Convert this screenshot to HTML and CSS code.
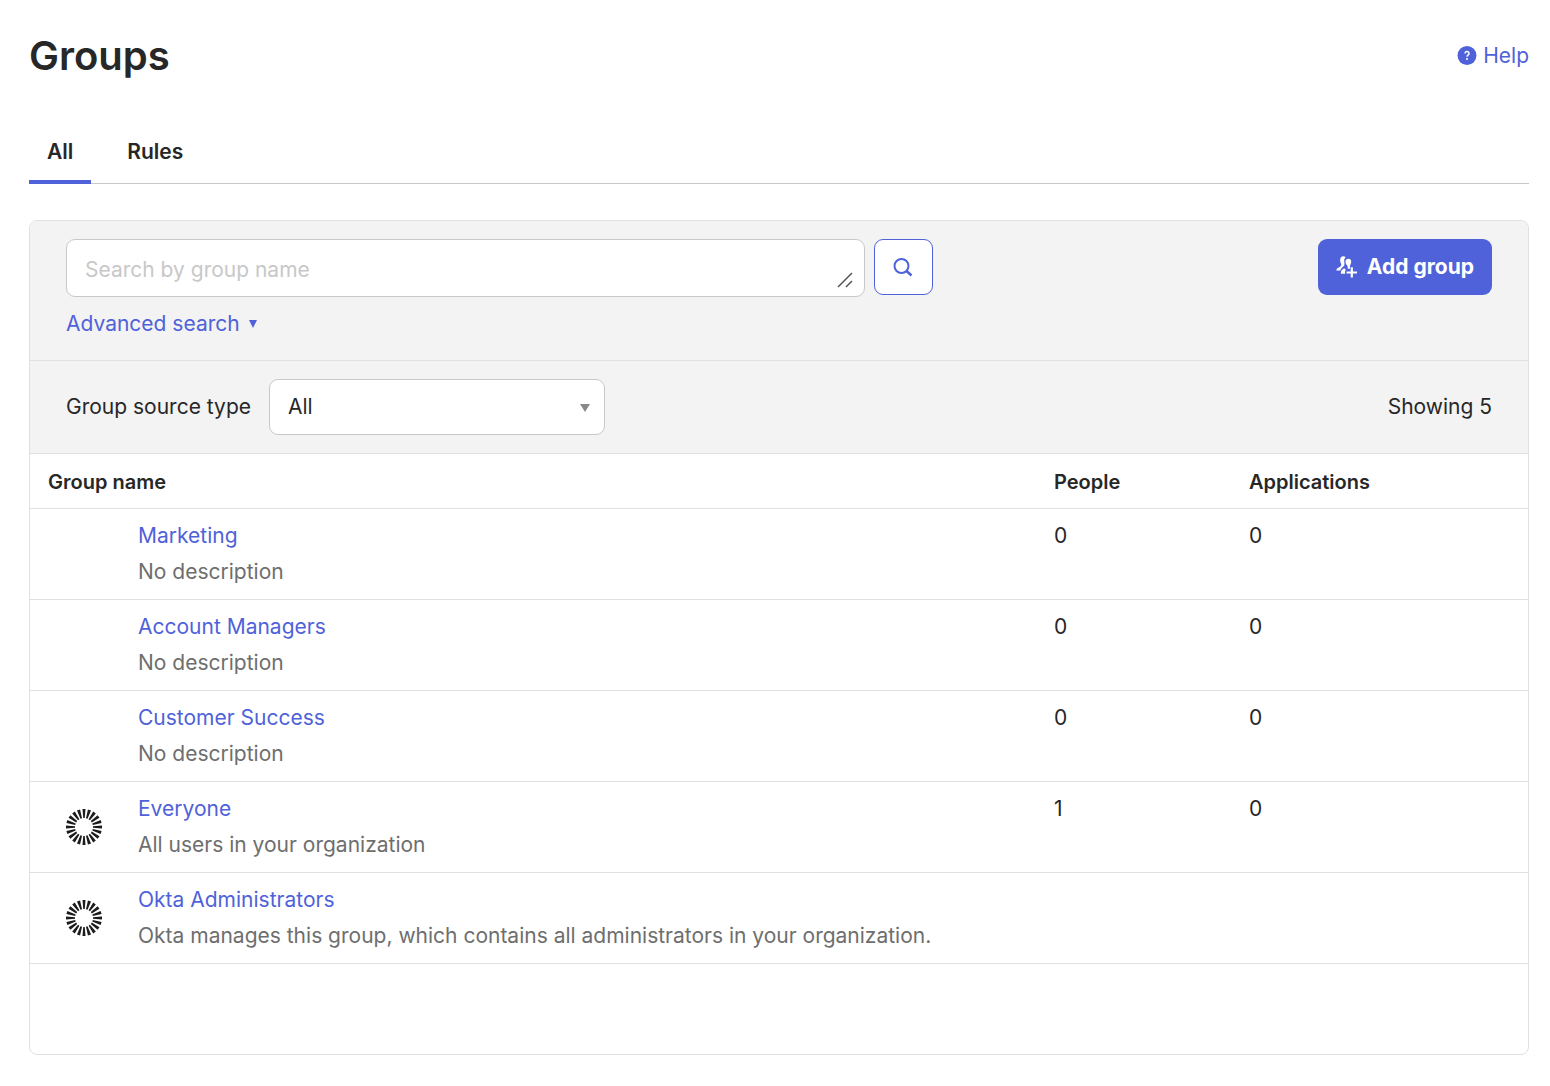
FILE: index.html
```html
<!DOCTYPE html>
<html lang="en">

<head>
    <meta charset="UTF-8">
    <meta name="viewport" content="width=device-width, initial-scale=1.0">
    <title>Groups</title>
    <link rel="stylesheet" href="styles.css">
</head>

<body>
    <svg class="symbols" aria-hidden="true">
        <symbol id="okta-logo" viewBox="0 0 36 36">
            <circle cx="18" cy="18" r="13.500" fill="none" stroke="#1c1c1c" stroke-width="9" pathLength="200"
                stroke-dasharray="5.600 4.400" stroke-dashoffset="2.800" />
        </symbol>
    </svg>

    <header class="header">
        <h1 class="title">Groups</h1>
        <a class="help" href="#">
            <svg class="help-icon" viewBox="0 0 20 20" aria-hidden="true">
                <circle cx="10" cy="9.500" r="9.500" fill="#4f62d9" />
                <path d="M8 7.500a2 2 0 1 1 3 1.700c-.7.4-1 .8-1 1.500" fill="none" stroke="#fff" stroke-width="1.500" />
                <circle cx="10" cy="12.900" r="1" fill="#fff" />
            </svg>
            Help
        </a>
    </header>

    <nav class="tabs">
        <a class="tab active" href="#">All</a>
        <a class="tab" href="#">Rules</a>
    </nav>

    <main class="panel">
        <form class="search">
            <div class="search-row">
                <div class="search-box">
                    <textarea class="search-input" rows="1" placeholder="Search by group name"
                        aria-label="Search by group name"></textarea>
                    <svg class="grip" viewBox="0 0 16 16" aria-hidden="true">
                        <path d="M1 15L15 1M9 15L15 9" fill="none" stroke="#555" stroke-width="1.500" />
                    </svg>
                </div>
                <button class="search-btn" type="button" aria-label="Search">
                    <svg class="search-icon" viewBox="0 0 20 20" aria-hidden="true">
                        <circle cx="8.500" cy="9" r="7" fill="none" stroke="#4f62d9" stroke-width="2" />
                        <path d="M13.500 14L18.500 18.500" stroke="#4f62d9" stroke-width="2.500" />
                    </svg>
                </button>
                <button class="add-btn" type="button">
                    <svg class="add-icon" viewBox="0 0 22 22" fill="#fff" aria-hidden="true">
                        <path d="M4.800 1.500C6 .1 8.400 0 9.600 1.200C8.400 2.300 8 4 8.300 6C8.600 7.800 8.800 9 7.600 10.200C5.800 11.800 4.800 12.600 4.400 14.500H0.200C0.400 12.700 1.600 12 3.400 11.200C4.800 10.500 5.400 9.600 5.200 8.300C4.200 6 3.600 3.200 4.800 1.500Z" />
                        <path d="M12.400 2.700C14.600 2.700 15.500 4.300 15.200 6.300C15 7.900 14.200 8.900 14 10V12.700H11.700V10.200C10.500 9 9.400 7.500 9.500 5.300C9.600 3.700 10.700 2.700 12.400 2.700Z" />
                        <path d="M8.300 12.200L10.300 14.600H9V17.700H4.800C4.800 15 5.900 13.200 8.300 12.200Z" />
                        <path d="M14.700 11.300H16.900V15.400H21V17.500H16.900V21.500H14.700V17.500H10.500V15.400H14.700Z" />
                    </svg>
                    Add group
                </button>
            </div>
            <a class="advanced" href="#">Advanced search
                <svg class="advanced-arrow" viewBox="0 0 8 8" aria-hidden="true">
                    <path d="M0 0H8L4 8Z" fill="#4f62d9" />
                </svg>
            </a>
        </form>

        <div class="filter">
            <label for="source">Group source type</label>
            <div class="select-box">
                <select class="select" id="source">
                    <option selected>All</option>
                    <option>Okta groups</option>
                </select>
                <svg class="select-arrow" viewBox="0 0 10 8" aria-hidden="true">
                    <path d="M0 0H10L5 8Z" fill="#888" />
                </svg>
            </div>
            <span class="count">Showing 5</span>
        </div>

        <table class="groups">
            <thead>
                <tr>
                    <th colspan="2">Group name</th>
                    <th class="col-people">People</th>
                    <th class="col-apps">Applications</th>
                </tr>
            </thead>
            <tbody>
                <tr>
                    <td class="col-icon"></td>
                    <td><a href="#">Marketing</a><p>No description</p></td>
                    <td>0</td>
                    <td>0</td>
                </tr>
                <tr>
                    <td class="col-icon"></td>
                    <td><a href="#">Account Managers</a><p>No description</p></td>
                    <td>0</td>
                    <td>0</td>
                </tr>
                <tr>
                    <td class="col-icon"></td>
                    <td><a href="#">Customer Success</a><p>No description</p></td>
                    <td>0</td>
                    <td>0</td>
                </tr>
                <tr>
                    <td class="col-icon"><svg class="logo" aria-hidden="true"><use href="#okta-logo" /></svg></td>
                    <td><a href="#">Everyone</a><p>All users in your organization</p></td>
                    <td>1</td>
                    <td>0</td>
                </tr>
                <tr>
                    <td class="col-icon"><svg class="logo" aria-hidden="true"><use href="#okta-logo" /></svg></td>
                    <td><a href="#">Okta Administrators</a><p>Okta manages this group, which contains all administrators in your organization.</p></td>
                    <td></td>
                    <td></td>
                </tr>
            </tbody>
        </table>
    </main>
</body>

</html>
```

FILE: styles.css
```css
* {
    margin: 0;
    padding: 0;
    box-sizing: border-box;
}

body {
    padding: 32px 21px 31px 29px;
    background-color: #fff;
    color: #272727;
    font-family: Inter, sans-serif;
    font-size: 21px;
    line-height: 36px;
}

a {
    color: #4f62d9;
    text-decoration: none;
}

button,
select,
textarea {
    font: inherit;
    color: inherit;
}

.symbols {
    display: none;
}

.header {
    display: flex;
    justify-content: space-between;
    align-items: center;
    height: 48px;
}

.title {
    font-size: 40px;
    font-weight: 600;
    line-height: 50px;
}

.help {
    display: flex;
    align-items: center;
    gap: 6px;
}

.help-icon {
    width: 20px;
    height: 20px;
}

.tabs {
    display: flex;
    gap: 18px;
    margin-top: 54px;
    border-bottom: 1px solid #c8c8c8;
}

.tab {
    padding: 0 18px 10px;
    margin-bottom: -1px;
    border-bottom: 4px solid transparent;
    color: #272727;
    font-weight: 600;
}

.active {
    border-color: #4f62d9;
}

.panel {
    margin-top: 36px;
    padding-bottom: 90px;
    border: 1px solid #e0e0e0;
    border-radius: 8px;
    overflow: hidden;
}

.search,
.filter {
    padding: 18px 36px;
    background-color: #f3f3f3;
    border-bottom: 1px solid #e0e0e0;
}

.search-row {
    display: flex;
    align-items: flex-start;
    gap: 9px;
    margin-bottom: 9px;
}

.search-box {
    position: relative;
    width: 56%;
}

.search-input {
    display: block;
    width: 100%;
    height: 58px;
    padding: 12px 18px 8px;
    border: 1px solid #c8c8c8;
    border-radius: 9px;
    outline: none;
    resize: none;
    overflow: hidden;
}

.search-input::placeholder {
    color: #c8c8c8;
}

.grip {
    position: absolute;
    right: 12px;
    bottom: 9px;
    width: 16px;
    height: 16px;
}

.search-btn {
    display: flex;
    justify-content: center;
    align-items: center;
    width: 59px;
    height: 56px;
    background-color: #fff;
    border: 1px solid #4f62d9;
    border-radius: 9px;
    cursor: pointer;
}

.search-icon {
    width: 20px;
    height: 20px;
}

.add-btn {
    display: flex;
    align-items: center;
    gap: 9px;
    height: 56px;
    margin-left: auto;
    padding: 0 18px;
    background-color: #4f62d9;
    border: none;
    border-radius: 9px;
    color: #fff;
    font-weight: 700;
    cursor: pointer;
}

.add-icon {
    width: 22px;
    height: 22px;
}

.advanced {
    display: flex;
    align-items: center;
    gap: 9px;
}

.advanced-arrow {
    width: 8px;
    height: 8px;
}

.filter {
    display: flex;
    align-items: center;
    gap: 18px;
}

.select-box {
    position: relative;
    width: 336px;
}

.select {
    display: block;
    width: 100%;
    height: 56px;
    padding: 0 18px;
    appearance: none;
    background-color: #fff;
    border: 1px solid #c8c8c8;
    border-radius: 9px;
}

.select-arrow {
    position: absolute;
    top: 25px;
    right: 15px;
    width: 10px;
    height: 8px;
    pointer-events: none;
}

.count {
    margin-left: auto;
}

.groups {
    width: 100%;
    border-collapse: collapse;
}

.groups tr {
    border-bottom: 1px solid #e0e0e0;
}

.groups th {
    padding: 10px 18px 8px;
    font-size: 20px;
    font-weight: 600;
    text-align: left;
}

.groups td {
    padding: 9px 18px;
    vertical-align: top;
}

.groups p {
    color: #6e6e6e;
}

.groups .col-icon {
    width: 90px;
    padding: 9px 18px 9px 36px;
    vertical-align: middle;
}

.groups .col-people {
    width: 195px;
}

.groups .col-apps {
    width: 297px;
}

.logo {
    display: block;
    width: 36px;
    height: 36px;
}
```
